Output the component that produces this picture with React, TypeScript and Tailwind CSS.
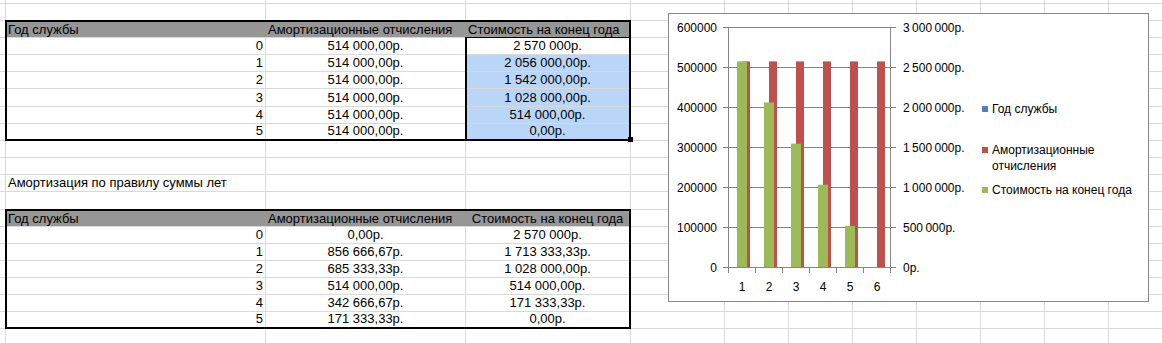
import React from "react";

const font = "font-['Liberation_Sans',Arial,sans-serif]";

type Row = { y: string; a: string; c: string };

const rows1: Row[] = [
  { y: "0", a: "514 000,00р.", c: "2 570 000р." },
  { y: "1", a: "514 000,00р.", c: "2 056 000,00р." },
  { y: "2", a: "514 000,00р.", c: "1 542 000,00р." },
  { y: "3", a: "514 000,00р.", c: "1 028 000,00р." },
  { y: "4", a: "514 000,00р.", c: "514 000,00р." },
  { y: "5", a: "514 000,00р.", c: "0,00р." },
];

const rows2: Row[] = [
  { y: "0", a: "0,00р.", c: "2 570 000р." },
  { y: "1", a: "856 666,67р.", c: "1 713 333,33р." },
  { y: "2", a: "685 333,33р.", c: "1 028 000,00р." },
  { y: "3", a: "514 000,00р.", c: "514 000,00р." },
  { y: "4", a: "342 666,67р.", c: "171 333,33р." },
  { y: "5", a: "171 333,33р.", c: "0,00р." },
];

function Header({ centerC }: { centerC?: boolean }) {
  return (
    <div className="col-span-3 bg-[#969696] flex items-end text-[13px] leading-[15px] text-black">
      <div className="w-[259px] pl-px whitespace-nowrap">Год службы</div>
      <div className="w-[200px] pl-[2px] whitespace-nowrap">Амортизационные отчисления</div>
      <div className={`w-[163px] whitespace-nowrap ${centerC ? "text-center" : "pl-[2px]"}`}>
        Стоимость на конец года
      </div>
    </div>
  );
}

function DataCells({ r, selected, first }: { r: Row; selected?: boolean; first?: boolean }) {
  const cBg = selected ? (first ? "bg-white" : "bg-[#b9d6f9]") : "bg-white";
  return (
    <>
      <div className="bg-white text-right pr-[2px] text-[13px] leading-[16px] flex items-end justify-end">{r.y}</div>
      <div className="bg-white text-center text-[13px] leading-[16px] flex items-end justify-center">{r.a}</div>
      <div className={`${cBg} text-center text-[13px] leading-[16px] flex items-end justify-center`}>{r.c}</div>
    </>
  );
}

function Chart() {
  const zero = 253;
  const grid = [13, 53, 93, 133, 173, 213, 253];
  const left = ["600000", "500000", "400000", "300000", "200000", "100000", "0"];
  const right = [
    "3\u2009000\u2009000р.",
    "2\u2009500\u2009000р.",
    "2\u2009000\u2009000р.",
    "1\u2009500\u2009000р.",
    "1\u2009000\u2009000р.",
    "500\u2009000р.",
    "0р.",
  ];
  const green = [2570000, 2056000, 1542000, 1028000, 514000, 0];
  return (
    <div className="absolute left-[668px] top-[13px] w-[481px] h-[289px] border border-[#868686] bg-white">
      <svg width="479" height="287" className={font}>
        {grid.map((y, i) => (
          <line key={i} x1={59} x2={222} y1={y + 0.5} y2={y + 0.5} stroke="#868686" strokeWidth={1} />
        ))}
        {grid.map((y, i) => (
          <g key={"t" + i}>
            <line x1={54} x2={59} y1={y + 0.5} y2={y + 0.5} stroke="#868686" />
            <line x1={222} x2={227} y1={y + 0.5} y2={y + 0.5} stroke="#868686" />
          </g>
        ))}
        <line x1={59.5} x2={59.5} y1={13} y2={259} stroke="#868686" />
        <line x1={221.5} x2={221.5} y1={13} y2={259} stroke="#868686" />
        {Array.from({ length: 7 }).map((_, i) => (
          <line key={"c" + i} x1={59.5 + 27 * i} x2={59.5 + 27 * i} y1={253} y2={259} stroke="#868686" />
        ))}
        {Array.from({ length: 6 }).map((_, i) => (
          <rect key={"r" + i} x={73 + 27 * i} y={zero - 205.6} width={8} height={205.6} fill="#c0504d" />
        ))}
        {green.map((v, i) =>
          v > 0 ? (
            <rect
              key={"g" + i}
              x={68 + 27 * i}
              y={zero - (v / 3000000) * 240}
              width={10}
              height={(v / 3000000) * 240}
              fill="#9bbb59"
            />
          ) : null
        )}
        {left.map((t, i) => (
          <text key={"l" + i} x={48} y={grid[i] + 4.5} fontSize={12} textAnchor="end" fill="#000">
            {t}
          </text>
        ))}
        {right.map((t, i) => (
          <text key={"rr" + i} x={234} y={grid[i] + 4.5} fontSize={12} fill="#000">
            {t}
          </text>
        ))}
        {[1, 2, 3, 4, 5, 6].map((n, i) => (
          <text key={"x" + i} x={73 + 27 * i} y={277} fontSize={12} textAnchor="middle" fill="#000">
            {n}
          </text>
        ))}
        <rect x={313} y={92} width={6} height={6} fill="#4f81bd" />
        <text x={323} y={99} fontSize={12} fill="#000">Год службы</text>
        <rect x={313} y={133} width={6} height={6} fill="#c0504d" />
        <text x={323} y={140} fontSize={12} fill="#000">Амортизационные</text>
        <text x={323} y={156} fontSize={12} fill="#000">отчисления</text>
        <rect x={313} y={173} width={6} height={6} fill="#9bbb59" />
        <text x={323} y={180} fontSize={12} fill="#000">Стоимость на конец года</text>
      </svg>
    </div>
  );
}

export default function App() {
  const empty = Array.from({ length: 252 - 43 });
  return (
    <div className={`${font} text-black w-[1162px] h-[343px] overflow-hidden bg-white`}>
      <div className="relative grid gap-px bg-[#d9d9d9] w-[1162px] h-[343px] grid-cols-[5px_259px_199px_164px_93px_63px_63px_63px_63px_63px_63px_53px] grid-rows-[3px_16px_16px_16px_16px_16px_17px_16px_16px_16px_16px_16px_17px_16px_16px_16px_16px_16px_16px_16px_14px]">
        {/* Table 1 */}
        <div className="col-start-2 col-span-3 row-start-3 row-span-7 -m-px relative border-2 border-black bg-[#d9d9d9] grid grid-cols-[258px_199px_163px] grid-rows-[15px_16px_16px_16px_17px_16px_15px] gap-px">
          <Header />
          {rows1.map((r, i) => (
            <DataCells key={i} r={r} selected first={i === 0} />
          ))}
          <div className="absolute left-[458px] top-[15px] w-[166px] h-[104px] border-l-2 border-t border-black pointer-events-none" />
          <div className="absolute left-[621px] top-[115px] w-[5px] h-[5px] bg-black" />
        </div>

        {/* Caption */}
        <div className="col-start-2 row-start-12 bg-white pl-[2px] text-[13px] leading-[16px] flex items-end whitespace-nowrap">
          Амортизация по правилу суммы лет
        </div>

        {/* Table 2 */}
        <div className="col-start-2 col-span-3 row-start-14 row-span-7 -m-px border-2 border-black bg-[#d9d9d9] grid grid-cols-[258px_199px_163px] grid-rows-[15px_16px_16px_16px_16px_16px_15px] gap-px">
          <Header centerC />
          {rows2.map((r, i) => (
            <DataCells key={i} r={r} />
          ))}
        </div>

        {empty.map((_, i) => (
          <div key={i} className="bg-white" />
        ))}

        <Chart />
      </div>
    </div>
  );
}
